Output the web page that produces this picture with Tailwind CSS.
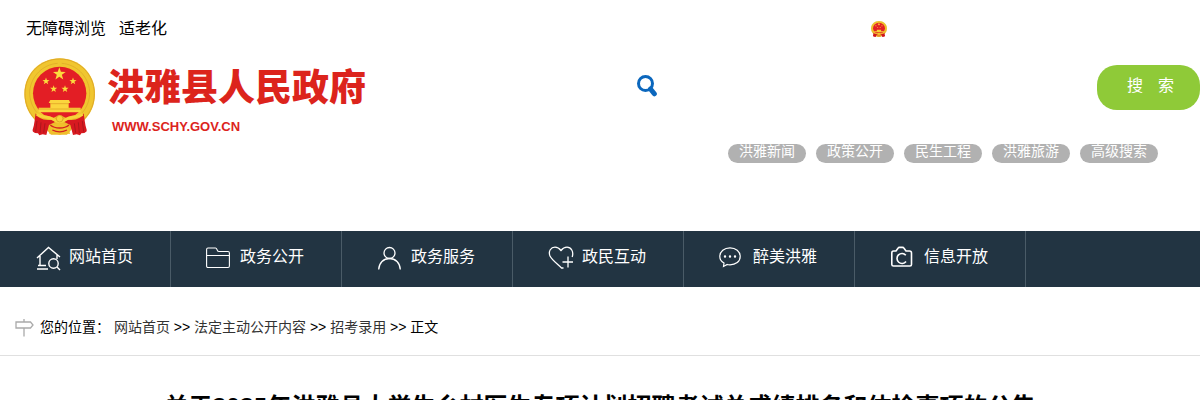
<!DOCTYPE html>
<html lang="zh-CN">
<head>
    <meta charset="UTF-8">
    <meta name="viewport" content="width=device-width, initial-scale=1.0">
    <title>洪雅县人民政府</title>
    <script src="https://cdn.jsdelivr.net/npm/@tailwindcss/browser@4"></script>
</head>
<body class="bg-white text-black text-base overflow-hidden font-['Liberation_Sans','Noto_Sans_CJK_SC',sans-serif]">
    <header>
        <!-- top bar -->
        <div class="flex h-14 items-center justify-between pl-[26px] pr-[313px]">
            <div class="flex gap-[13px] pt-0.5">
                <a href="#">无障碍浏览</a>
                <a href="#">适老化</a>
            </div>
            <a href="#" aria-label="中国政府网">
                <svg class="mt-0.5 h-4 w-4" viewBox="27 24 214 232" preserveAspectRatio="none"><use href="#emblem"/></svg>
            </a>
        </div>

        <div class="flex justify-between pb-[68px]">
            <!-- logo -->
            <a href="#" class="flex gap-[11px] pl-6 pt-[2px] text-[#dc241c]">
                <svg class="h-[78px] w-[72px]" viewBox="27 24 216 234">
                    <defs>
                        <path id="star" d="M0-20 4.7-6.5 19-6.2 7.6 2.5 11.8 16.2 0 8-11.8 16.2-7.6 2.5-19-6.2-4.7-6.5Z"/>
                        <g id="emblem">
                            <path d="M134 25C76 25 28 70 28 131c0 35 14 63 37 84h138c23-21 37-49 37-84C240 70 192 25 134 25Z" fill="#f0c62f"/>
                            <path d="M134 27C77 27 30 72 30 131c0 30 11 55 28 74M134 27c57 0 104 45 104 104 0 30-11 55-28 74" fill="none" stroke="#dfa829" stroke-width="3"/>
                            <path d="M128 40c-44 3-80 38-84 84-1 24 8 48 22 64M140 40c44 3 80 38 84 84 1 24-8 48-22 64" fill="none" stroke="#dda627" stroke-width="2"/>
                            <circle cx="134" cy="130" r="80" fill="#e31e25"/>
                            <g fill="#fbdc3e">
                                <use href="#star" x="133" y="72"/>
                                <use href="#star" transform="translate(93 94) scale(.56)"/>
                                <use href="#star" transform="translate(174 94) scale(.56)"/>
                                <use href="#star" transform="translate(116 117) scale(.56)"/>
                                <use href="#star" transform="translate(150 117) scale(.56)"/>
                            </g>
                            <path d="M106 150h56l4 9h-5v14h36v14H71v-14h35v-14h-5Z" fill="#fbd53d"/>
                            <path d="M106 161h56M72 177h124" stroke="#dc9b22" stroke-width="2"/>
                            <path d="M62 193c25 4 44 3 52 11l20-9 20 9c8-8 27-7 52-11l-6 30-22 6-22 25h-48l-22-25-22-6Z" fill="#edbb2b"/>
                            <path d="M62 190c7 15 22 22 48 19l10 7-18 9-8 30-11-2-10 3-4-6-9-1c-5-4-8-4-7-10 6-17 6-33 9-49ZM206 190c-7 15-22 22-48 19l-10 7 18 9 8 30 11-2 10 3 4-6 9-1c5-4 8-4 7-10-6-17-6-33-9-49Z" fill="#d71920"/>
                            <path d="M66 213l-4 32M78 217l-3 32M90 220l-4 28M202 213l4 32M190 217l3 32M178 220l4 28" stroke="#981319" stroke-width="2"/>
                            <path d="M65 194c18 9 40 6 52 15 10 8 24 8 34 0 12-9 34-6 52-15" fill="none" stroke="#f8d33a" stroke-width="8"/>
                            <path d="M103 252c3-23 14-33 31-33s28 10 31 33l-19-2-12 5-12-5Z" fill="#f0c02c"/>
                            <path d="M106 225c14 12 42 12 56 0M112 240c14 7 30 7 44 0" fill="none" stroke="#d42220" stroke-width="4"/>
                            <circle cx="134" cy="206" r="10" fill="#f8d33a" stroke="#d2941d" stroke-width="2"/>
                        </g>
                    </defs>
                    <use href="#emblem"/>
                </svg>
                <span class="block pt-[10px]">
                    <span class="block text-[37px] leading-[42px] font-black">洪雅县人民政府</span>
                    <span class="mt-[9px] block pl-[5px] text-[13px] leading-4 font-bold">WWW.SCHY.GOV.CN</span>
                </span>
            </a>

            <!-- search -->
            <div class="w-[563px] pt-[9px]">
                <form class="flex h-[45px] items-center">
                    <label for="keyword" aria-label="搜索">
                        <svg class="-mt-1 h-[22px] w-5" viewBox="0 0 20 22" fill="none" stroke="#0b67bd">
                            <circle cx="8.5" cy="8.5" r="7" stroke-width="3"/>
                            <path d="m13.5 14 3.8 4.8" stroke-width="5" stroke-linecap="round"/>
                        </svg>
                    </label>
                    <input type="text" id="keyword" autocomplete="off" class="h-full min-w-0 flex-1 px-3 outline-none">
                    <button type="button" class="flex h-full w-[103px] items-center justify-center gap-[15px] rounded-[20px] bg-[#8fca38] pb-1 pl-1 text-white"><span>搜</span> <span>索</span></button>
                </form>
                <div class="mt-[34px] flex justify-end gap-[10px] pr-[42px] text-center text-sm leading-[15px] text-white">
                    <a href="#" class="h-[19px] w-[78px] rounded-full bg-[#b1b1b1]">洪雅新闻</a>
                    <a href="#" class="h-[19px] w-[78px] rounded-full bg-[#b1b1b1]">政策公开</a>
                    <a href="#" class="h-[19px] w-[78px] rounded-full bg-[#b1b1b1]">民生工程</a>
                    <a href="#" class="h-[19px] w-[78px] rounded-full bg-[#b1b1b1]">洪雅旅游</a>
                    <a href="#" class="h-[19px] w-[78px] rounded-full bg-[#b1b1b1]">高级搜索</a>
                </div>
            </div>
        </div>
    </header>

    <!-- main menu -->
    <nav class="flex h-14 bg-[#223442] text-white">
        <a href="#" class="flex w-[171px] items-center gap-2 border-r border-[#4a5b67] pb-1 pl-[35px]">
            <svg class="mt-1 h-[26px] w-[26px]" viewBox="0 0 26 26" fill="none" stroke="currentColor" stroke-width="1.4">
                <path d="M2 12 13.5 1.5 25 11M5 10v9.5H3M2 23h11M5 19.5h6M22 9v4"/>
                <circle cx="18.5" cy="17.5" r="4.7"/>
                <path d="m22 21 3 3"/>
            </svg>
            <span>网站首页</span>
        </a>
        <a href="#" class="flex w-[171px] items-center gap-2 border-r border-[#4a5b67] pb-1 pl-[35px]">
            <svg class="mt-1 h-[26px] w-[26px]" viewBox="0 0 26 26" fill="none" stroke="currentColor" stroke-width="1.1">
                <path d="M.6 20V3.5Q.6 2 2 2h7.5q1 0 1.4 1.3.5 2.2 2 2.2H22q1.4 0 1.4 1.5v13q0 1.5-1.4 1.5H2Q.6 21.5.6 20ZM.6 9.5h22.8"/>
            </svg>
            <span>政务公开</span>
        </a>
        <a href="#" class="flex w-[171px] items-center gap-2 border-r border-[#4a5b67] pb-1 pl-[35px]">
            <svg class="mt-1 h-[26px] w-[26px]" viewBox="0 0 26 26" fill="none" stroke="currentColor" stroke-width="1.3">
                <circle cx="12.5" cy="7" r="5.5"/>
                <path d="M1.7 23.5C2 17 6.5 12.5 12.5 12.5S23 17 23.3 23.5"/>
            </svg>
            <span>政务服务</span>
        </a>
        <a href="#" class="flex w-[171px] items-center gap-2 border-r border-[#4a5b67] pb-1 pl-[35px]">
            <svg class="mt-1 h-[26px] w-[26px]" viewBox="0 0 26 26" fill="none" stroke="currentColor" stroke-width="1.3">
                <path d="M24.2 11C26 5.5 23 1.2 19 1.2c-3 0-4.5 1.3-6 3.3-1.5-2-3-3.3-6-3.3C3 1.2 0 5 2 10c1.5 3.5 8.5 9 11.5 12h2"/>
                <path d="M20 10.5v11M14.5 16H25"/>
            </svg>
            <span>政民互动</span>
        </a>
        <a href="#" class="flex w-[171px] items-center gap-2 border-r border-[#4a5b67] pb-1 pl-[35px]">
            <svg class="mt-1 h-[26px] w-[26px]" viewBox="0 0 26 26" fill="none" stroke="currentColor" stroke-width="1.2">
                <path d="M5 17C2.3 15.5.8 13.2.8 10.5.8 5.5 5.3 1.8 11 1.8s10.2 3.7 10.2 8.7S16.700 18.800 11 18.800c-1 0-2 0-2.8-.3L4.5 20.5Z"/>
                <path d="M6 10.5h.01M11 10.5h.01M16 10.5h.01" stroke-width="2.4" stroke-linecap="round"/>
            </svg>
            <span>醉美洪雅</span>
        </a>
        <a href="#" class="flex w-[171px] items-center gap-2 border-r border-[#4a5b67] pb-1 pl-[35px]">
            <svg class="mt-1 h-[26px] w-[26px]" viewBox="0 0 26 26" fill="none" stroke="currentColor" stroke-width="1.6">
                <path d="M3.5 5H6L8 2.2q.5-.8 1.5-.8h3q1 0 1.5.8L16 5h3.5q2 0 2 2v11.500q0 1.500-1.500 1.500H3.500q-1.700 0-1.700-1.500V7q0-2 1.700-2Z"/>
                <path d="M15.800 9.200A5 5 0 1 0 16 15.500"/>
            </svg>
            <span>信息开放</span>
        </a>
    </nav>

    <main>
        <!-- breadcrumb -->
        <div class="flex h-[69px] items-center border-b border-[#e0e0e0] pt-3 pl-[15px] text-sm">
            <svg class="mr-[6px] mt-0.5 h-[18px] w-[19px]" viewBox="0 0 19 18" fill="none" stroke="#aaa" stroke-width="1.3">
                <path d="M1 3h14.5L18 6l-2.5 3H1ZM9 0v3M9 9v8.5"/>
            </svg>
            <p>您的位置： <a href="#" class="text-[#333]">网站首页</a> &gt;&gt; <a href="#" class="text-[#333]">法定主动公开内容</a> &gt;&gt; <a href="#" class="text-[#333]">招考录用</a> &gt;&gt; 正文</p>
        </div>
        <h1 class="mt-[30px] text-center text-2xl leading-10 font-bold font-['Open_Sans','Noto_Sans_CJK_SC',sans-serif]">关于2025年洪雅县大学生乡村医生专项计划招聘考试总成绩排名和体检事项的公告</h1>
    </main>
</body>
</html>
